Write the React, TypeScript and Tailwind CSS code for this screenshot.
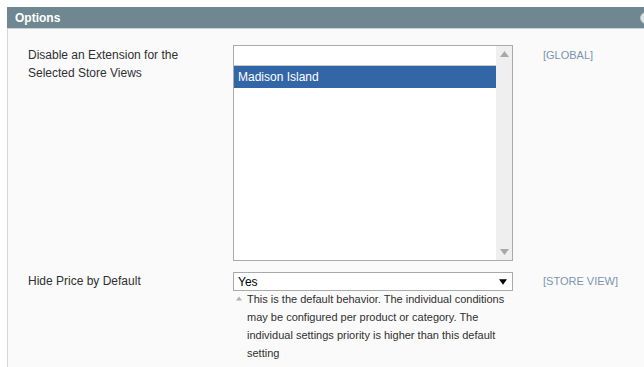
import React from 'react';

function Triangle({ dir, className }: { dir: 'up' | 'down'; className: string }) {
  return (
    <svg width="9" height="6" viewBox="0 0 9 6" className={className}>
      {dir === 'up' ? <polygon points="0,6 9,6 4.5,0" /> : <polygon points="0,0 9,0 4.5,6" />}
    </svg>
  );
}

export default function App() {
  return (
    <div className="w-[644px] h-[367px] bg-white overflow-hidden pt-[7px] pl-[7px] font-['Liberation_Sans',Arial,sans-serif]">
      {/* section header */}
      <div className="relative h-[22px] bg-[#6f8791] border-b border-[#c9d1d4] flex items-center pl-[8px]">
        <span className="text-[12px] font-bold text-white leading-none">Options</span>
        <div className="absolute right-[-8px] top-[5px] w-[12px] h-[12px] rounded-full bg-[#dfe5e7] border border-[#b8c4c8]" />
      </div>

      <div className="h-full bg-[#fafafa] border-l border-[#d6d6d6] pt-[16px] pl-[20px]">
        {/* row 1 */}
        <div className="flex">
          <div className="w-[205px] text-[12px] leading-[18px] text-[#303030] pt-[1px]">
            Disable an Extension for the<br />Selected Store Views
          </div>
          <div className="w-[280px] h-[216px] border border-[#aaaaaa] bg-white flex">
            <div className="flex-1 flex flex-col">
              <div className="h-[20px] border-b border-[#c8c8c8]" />
              <div className="h-[22px] bg-[#3366a6] text-white text-[12px] leading-[22px] pl-[4px]">Madison Island</div>
            </div>
            <div className="w-[16px] bg-[#efefef] flex flex-col items-center justify-between py-[5px]">
              <Triangle dir="up" className="fill-[#a8a8a8]" />
              <Triangle dir="down" className="fill-[#a8a8a8]" />
            </div>
          </div>
          <div className="pl-[30px] text-[11px] leading-[18px] text-[#7b95ad] pt-[1px]">[GLOBAL]</div>
        </div>

        {/* row 2 */}
        <div className="flex mt-[11px]">
          <div className="w-[205px] text-[12px] leading-[18px] text-[#303030]">Hide Price by Default</div>
          <div className="w-[280px]">
            <div className="h-[19px] border border-[#aaaaaa] bg-white flex items-center justify-between pl-[4px] pr-[5px]">
              <span className="text-[12px] text-black leading-none">Yes</span>
              <Triangle dir="down" className="fill-black w-[8px] h-[6px]" />
            </div>
            <div className="flex -mt-[1px]">
              <div className="w-[14px] shrink-0 pl-[3px] pt-[6px]">
                <Triangle dir="up" className="fill-[#b0b0b0] w-[6px] h-[5px]" />
              </div>
              <p className="text-[11px] leading-[18px] text-[#303030]">
                This is the default behavior. The individual conditions may be configured per product or category. The individual settings priority is higher than this default setting
              </p>
            </div>
          </div>
          <div className="pl-[30px] text-[11px] leading-[18px] text-[#7b95ad]">[STORE VIEW]</div>
        </div>
      </div>
    </div>
  );
}
